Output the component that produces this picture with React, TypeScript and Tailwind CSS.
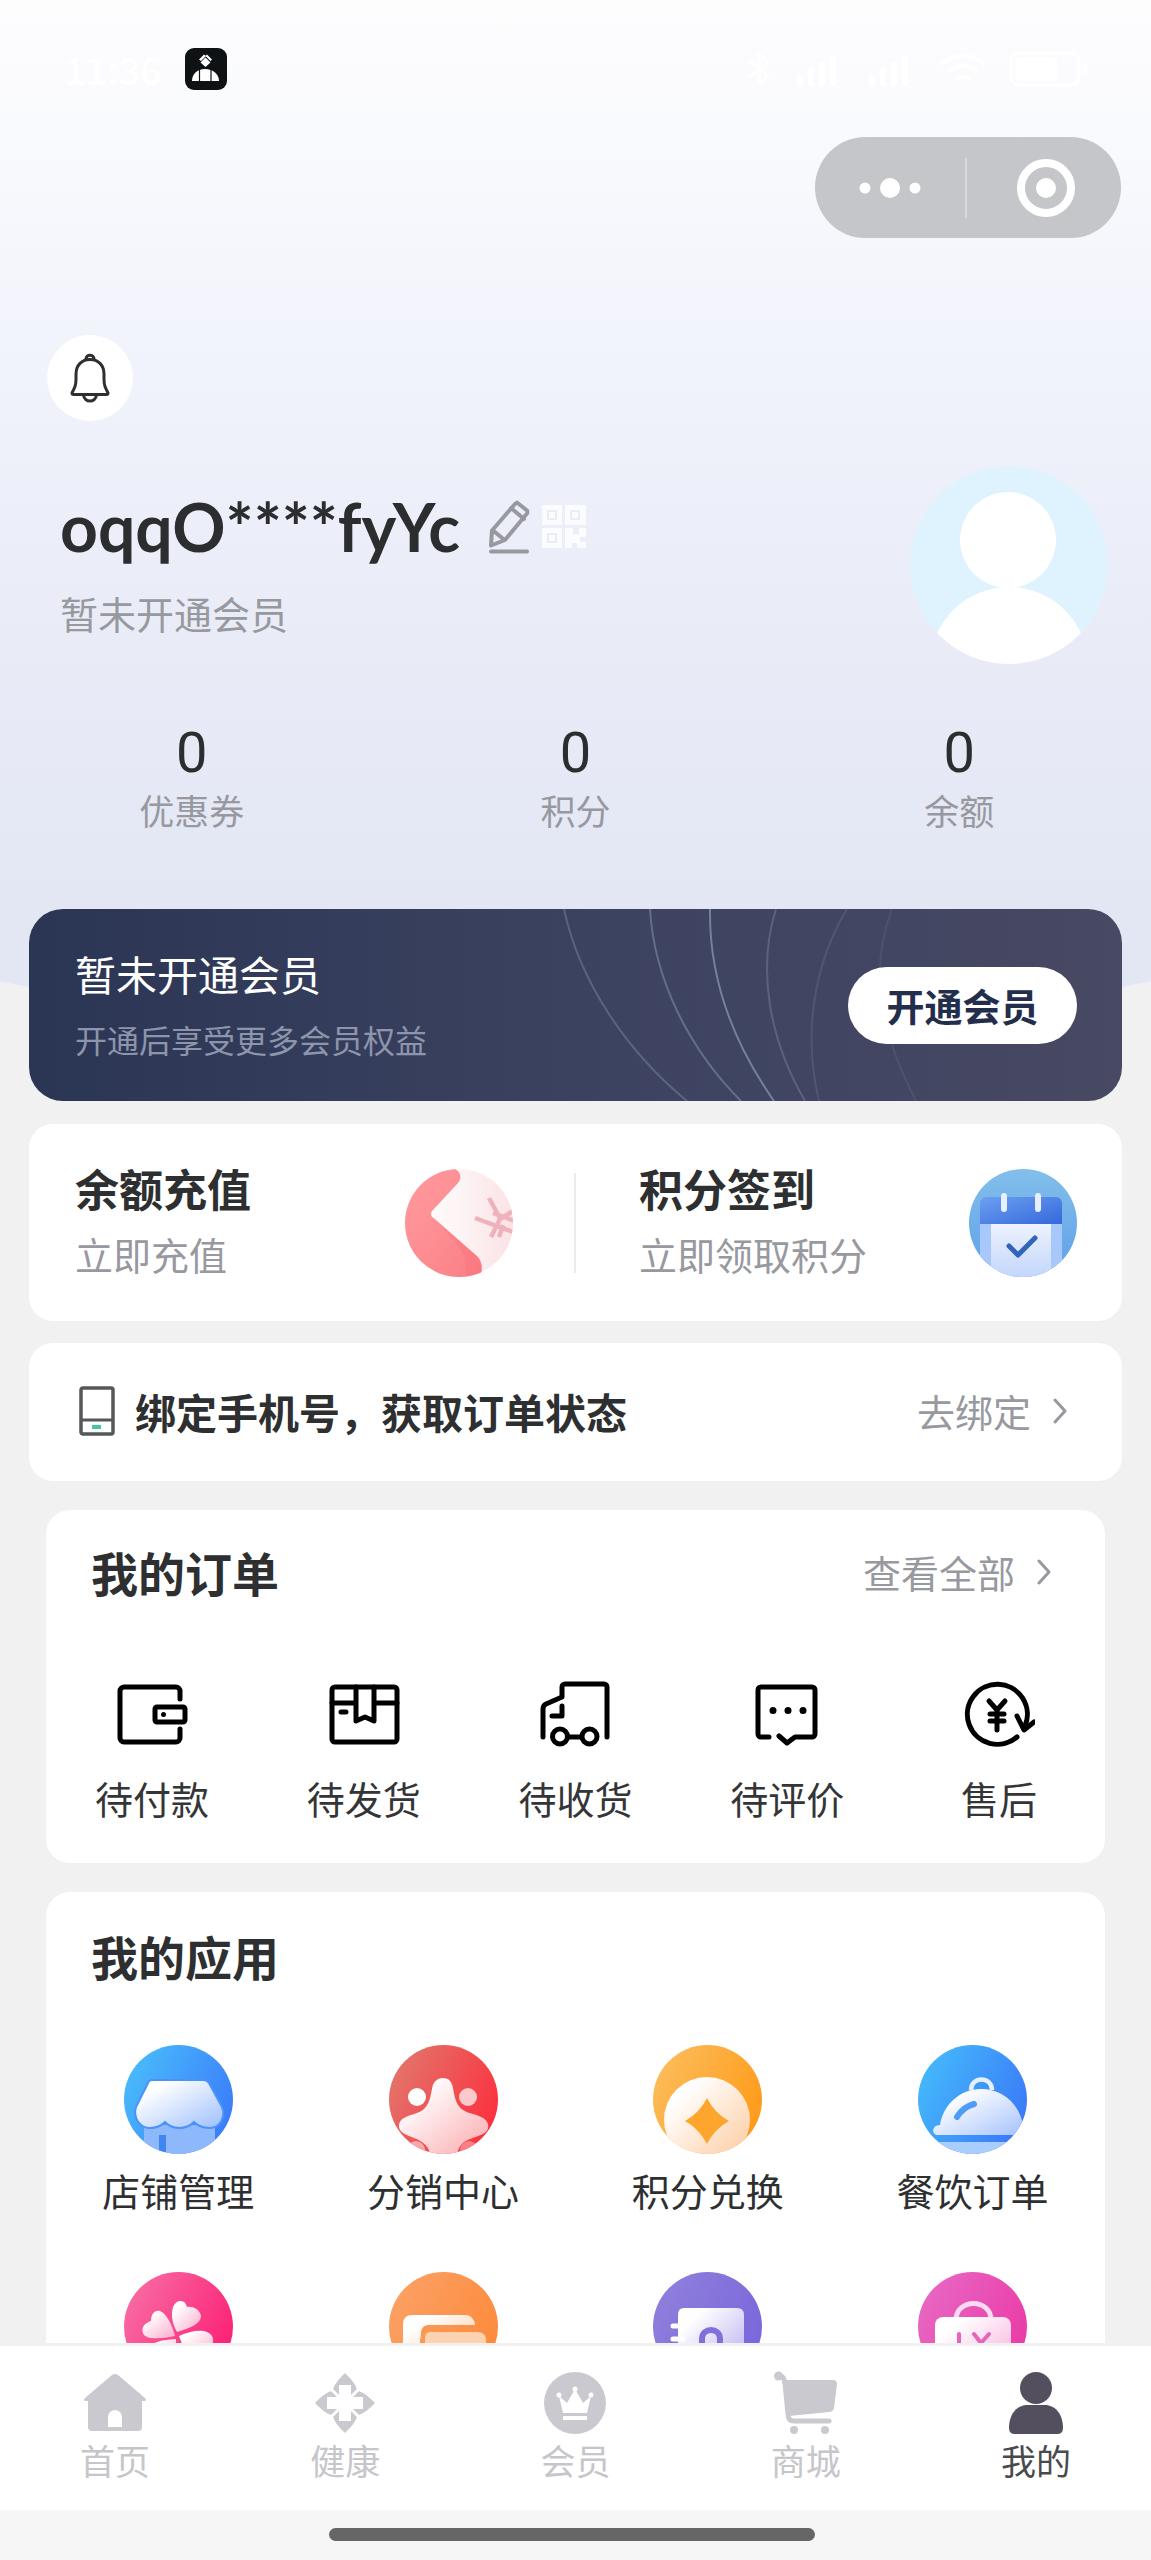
import type { ReactNode } from "react";

const line = {
  fill: "none",
  stroke: "currentColor",
  strokeWidth: 5,
  strokeLinecap: "round" as const,
  strokeLinejoin: "round" as const,
};

/* ---------- status bar ---------- */

function Signal() {
  return (
    <svg className="h-[34px] w-[50px]" viewBox="0 0 50 34" fill="#fff" aria-hidden="true">
      <rect x="2" y="22" width="6" height="12" rx="2" />
      <rect x="13" y="16" width="6" height="18" rx="2" />
      <rect x="24" y="10" width="6" height="24" rx="2" />
      <rect x="35" y="3" width="6" height="31" rx="2" />
    </svg>
  );
}

function StatusBar() {
  return (
    <div className="flex h-[137px] items-center justify-between pr-[62px] pl-[64px] text-white">
      <div className="flex items-center">
        <span className="w-[121px] text-[38px] leading-[48px] font-medium">11:36</span>
        <svg className="h-[42px] w-[42px]" viewBox="0 0 42 42" aria-hidden="true">
          <rect width="42" height="42" rx="9" fill="#0f1214" />
          <path d="M7 33c0-7 5-12 13-12s14 5 14 12z" fill="#fff" />
          <path d="M14.500 21v12M26 21v12" stroke="#0f1214" strokeWidth="1.200" />
          <path d="M20.500 9.500l5 5-5 4.500-5-4.500z" fill="#fff" />
          <path d="M14 11.500l5-5 2 1.500-5 5zM27 11.500l-5-5-1.500 1.500 5 5z" fill="#fff" />
        </svg>
      </div>
      <div className="flex items-center gap-[22px]">
        <svg className="h-[36px] w-[28px]" viewBox="0 0 28 36" {...line} strokeWidth={3} aria-hidden="true">
          <path d="M5 10l18 15-9 8V3l9 8L5 26" />
        </svg>
        <Signal />
        <Signal />
        <svg className="h-[36px] w-[48px]" viewBox="0 0 48 36" {...line} strokeWidth={4} aria-hidden="true">
          <path d="M4 12c12-10 28-10 40 0M11 20c8-7 18-7 26 0M18 28c4-3 8-3 12 0" />
        </svg>
        <svg className="h-[36px] w-[80px]" viewBox="0 0 80 36" aria-hidden="true">
          <rect x="2" y="2" width="68" height="32" rx="8" fill="none" stroke="#fff" strokeWidth="3" />
          <rect x="6" y="6" width="42" height="24" rx="5" fill="#fff" />
          <rect x="74" y="12" width="4" height="12" rx="2" fill="#fff" />
        </svg>
      </div>
    </div>
  );
}

function Capsule() {
  return (
    <div className="flex justify-end pr-[30px]">
      <div className="flex h-[101px] w-[306px] items-center rounded-full bg-[#c5c6ca]">
        <button className="flex h-full flex-1 items-center justify-center" aria-label="更多">
          <svg className="h-[24px] w-[64px]" viewBox="0 0 64 24" fill="#fff" aria-hidden="true">
            <circle cx="7" cy="12" r="5.500" />
            <circle cx="32" cy="12" r="10" />
            <circle cx="57" cy="12" r="5.500" />
          </svg>
        </button>
        <span className="h-[60px] w-[2px] bg-[#d9dadd]" />
        <button className="flex h-full flex-1 items-center justify-center pl-1" aria-label="关闭">
          <svg className="h-[58px] w-[58px]" viewBox="0 0 58 58" aria-hidden="true">
            <circle cx="29" cy="29" r="25" fill="none" stroke="#fff" strokeWidth="8" />
            <circle cx="29" cy="29" r="10" fill="#fff" />
          </svg>
        </button>
      </div>
    </div>
  );
}

/* ---------- profile ---------- */

function BellIcon() {
  return (
    <svg className="h-[50px] w-[42px] text-[#2e2f31]" viewBox="0 0 42 50" {...line} strokeWidth={3} aria-hidden="true">
      <path d="M3 40c3-6 4-8 4-14v-5C7 12 13 6.500 21 6.500S35 12 35 21v5c0 6 1 8 4 14 0 1-.500 1.500-1.500 1.500h-33C3.500 41.500 3 41 3 40z" />
      <path d="M17 6c0-5 8-5 8 0M14.500 42c1 8 12 8 13 0" />
    </svg>
  );
}

function PencilIcon() {
  return (
    <svg className="h-[54px] w-[42px]" viewBox="0 0 42 54" {...line} strokeWidth={4} aria-hidden="true">
      <path d="M27 4l2-1.500 10 8c.500 1 .500 2 0 3L17 40 3 45.500l1-15zM23 8l13 11M4.500 30l12 10" />
      <path d="M3 51.500h36" />
    </svg>
  );
}

function QrIcon() {
  return (
    <svg className="h-[44px] w-[44px]" viewBox="0 0 44 44" aria-hidden="true">
      <path d="M0 0h20v20H0zM23 0h21v20H23zM0 23h20v20H0zM23 23h8v6h6v-6h7v9h-6v5h6v6h-9v-5h-5v5h-7z" fill="#fff" fillOpacity="0.8" />
      <path d="M6 6h8v8H6zM29 6h8v8h-8zM6 29h8v8H6z" fill="none" stroke="#e9edf6" strokeWidth="2" />
    </svg>
  );
}

function Avatar() {
  return (
    <svg className="h-[200px] w-[200px]" viewBox="0 0 200 200" aria-hidden="true">
      <defs>
        <clipPath id="avatar">
          <circle cx="100" cy="100" r="99" />
        </clipPath>
      </defs>
      <circle cx="100" cy="100" r="99" fill="#dff3fe" />
      <g clipPath="url(#avatar)" fill="#fff">
        <circle cx="99" cy="75" r="48" />
        <circle cx="100" cy="201" r="79" />
      </g>
    </svg>
  );
}

const stats = ["优惠券", "积分", "余额"];

function Profile() {
  return (
    <header className="bg-[linear-gradient(180deg,#fdfdfe_0px,#f8f9fd_180px,#f4f5fc_290px,#f0f3fb_370px,#e9ecf7_640px,#e3e7f4_900px)] pb-[206px] [clip-path:ellipse(152%_100%_at_50%_0%)]">
      <StatusBar />
      <Capsule />
      <button className="mt-[97px] ml-[47px] flex h-[86px] w-[86px] items-center justify-center rounded-full bg-white" aria-label="消息">
        <BellIcon />
      </button>
      <div className="mt-11 flex items-center justify-between pr-[42px] pl-[60px]">
        <div className="pb-1">
          <div className="flex items-center">
            <h1 className="font-['Lato','Noto_Sans_CJK_SC',sans-serif] text-[66px] leading-[80px] font-bold text-[#2b2d2f]">
              oqqO****fyYc
            </h1>
            <button className="ml-7 text-[#97999f]" aria-label="编辑">
              <PencilIcon />
            </button>
            <button className="ml-3" aria-label="二维码">
              <QrIcon />
            </button>
          </div>
          <p className="mt-5 text-[38px] leading-[52px] text-[#97999f]">暂未开通会员</p>
        </div>
        <Avatar />
      </div>
      <dl className="mt-[54px] grid grid-cols-3 text-center">
        {stats.map((label) => (
          <div key={label} className="flex flex-col-reverse">
            <dt className="text-[35px] leading-[46px] text-[#97999f]">{label}</dt>
            <dd className="font-['Roboto',sans-serif] text-[56px] leading-[68px] text-[#2b2d2f]">0</dd>
          </div>
        ))}
      </dl>
    </header>
  );
}

/* ---------- cards ---------- */

function Membership() {
  return (
    <section className="relative flex h-[192px] items-center justify-between overflow-hidden rounded-[34px] bg-linear-to-r from-[#2b3654] via-[#3b4260] to-[#484963] pr-[45px] pl-[46px]">
      <svg className="absolute top-0 left-[520px] h-[192px] w-[400px]" viewBox="0 0 400 192" fill="none" stroke="#aebccb" strokeWidth="2" aria-hidden="true">
        <path d="M15 0C30 70 75 140 138 192" opacity=".28" />
        <path d="M101 0C105 70 140 140 192 192" opacity=".35" />
        <path d="M161 0C160 70 185 135 225 192" opacity=".5" />
        <path d="M227 0C208 60 220 130 256 192" opacity=".25" />
        <path d="M298 0C262 60 255 130 270 192" opacity=".14" />
        <path d="M343 0C320 60 330 120 367 192" opacity=".1" />
      </svg>
      <div className="relative pb-1">
        <h2 className="text-[41px] leading-[56px] text-white">暂未开通会员</h2>
        <p className="mt-4 text-[32px] leading-[44px] text-[#8d94ab]">开通后享受更多会员权益</p>
      </div>
      <button className="relative h-[77px] w-[229px] rounded-full bg-white text-[38px] leading-[52px] font-bold text-[#232d4c]">
        开通会员
      </button>
    </section>
  );
}

function RechargeIcon() {
  return (
    <svg className="h-[108px] w-[108px] shrink-0" viewBox="0 0 108 108" aria-hidden="true">
      <defs>
        <clipPath id="recharge">
          <circle cx="54" cy="54" r="54" />
        </clipPath>
        <linearGradient id="rechargeRed" x1="0" y1="0" x2="1" y2="1">
          <stop offset="0" stopColor="#ff9a9e" />
          <stop offset=".5" stopColor="#fd8e93" />
          <stop offset="1" stopColor="#fb7d84" />
        </linearGradient>
        <linearGradient id="rechargePaper" x1="0" y1="0" x2="1" y2="0">
          <stop offset="0" stopColor="#fff" />
          <stop offset=".5" stopColor="#fdf4f5" />
          <stop offset="1" stopColor="#fbe2e5" />
        </linearGradient>
      </defs>
      <g clipPath="url(#recharge)">
        <path d="M0 0h108v108H0z" fill="url(#rechargePaper)" />
        <path d="M0 0h50c6 3 7 9 3 14L27 42q-2 3 0 6l46 40c4 5 5 13 2 20H0z" fill="url(#rechargeRed)" />
        <path d="M26 46l47 42c4 5 5 13 2 20H60c6-22-8-32-34-62z" fill="#f96f78" opacity=".35" />
        <path d="M84 29l12 22M70 49l38 14M108 42L95 50 86 68M88 44l22 8M98 56l-4 12" fill="none" stroke="#efb1bb" strokeWidth="4.500" />
      </g>
    </svg>
  );
}

function CheckInIcon() {
  return (
    <svg className="h-[108px] w-[108px] shrink-0" viewBox="0 0 108 108" aria-hidden="true">
      <defs>
        <clipPath id="checkin">
          <circle cx="54" cy="54" r="54" />
        </clipPath>
        <linearGradient id="checkinBg" x1="0" y1="0" x2="0" y2="1">
          <stop offset="0" stopColor="#82bfeb" />
          <stop offset="1" stopColor="#5f9fe9" />
        </linearGradient>
        <linearGradient id="checkinTop" x1="0" y1="0" x2="1" y2="1">
          <stop offset="0" stopColor="#6da0f0" />
          <stop offset="1" stopColor="#3468dc" />
        </linearGradient>
        <linearGradient id="checkinPage" x1="0" y1="0" x2="0" y2="1">
          <stop offset="0" stopColor="#eef3fe" />
          <stop offset="1" stopColor="#c3d6fb" />
        </linearGradient>
      </defs>
      <g clipPath="url(#checkin)">
        <path d="M0 0h108v108H0z" fill="url(#checkinBg)" />
        <path d="M11 54h82v54H11z" fill="#a8c7fa" />
        <path d="M22 54h60v54H22z" fill="url(#checkinPage)" />
        <path d="M11 55V34a6 6 0 0 1 6-6h70a6 6 0 0 1 6 6v21z" fill="url(#checkinTop)" />
        <path d="M35 27v13M69 27v13" stroke="#e6f0fe" strokeWidth="6" strokeLinecap="round" />
        <path d="M40 77l9 9 17-17" fill="none" stroke="#3165b8" strokeWidth="5" strokeLinecap="round" strokeLinejoin="round" />
      </g>
    </svg>
  );
}

function QuickAction({ title, note, icon }: { title: string; note: string; icon: ReactNode }) {
  return (
    <a href="#" className="flex flex-1 items-center justify-between pr-[61px] pl-[46px] last:pr-[45px] last:pl-[63px]">
      <span className="flex flex-col gap-2 pb-1.5">
        <span className="text-[44px] leading-[60px] font-bold text-[#2e2f31]">{title}</span>
        <span className="text-[38px] leading-[56px] text-[#97999f]">{note}</span>
      </span>
      {icon}
    </a>
  );
}

function Chevron() {
  return (
    <svg className="h-[26px] w-[14px]" viewBox="0 0 14 26" {...line} strokeWidth={3} aria-hidden="true">
      <path d="M2 2l10 11L2 24" />
    </svg>
  );
}

function MoreLink({ children }: { children: string }) {
  return (
    <a href="#" className="flex items-center gap-[22px] text-[38px] leading-[52px] text-[#97999f]">
      {children}
      <Chevron />
    </a>
  );
}

function BindPhone() {
  return (
    <section className="flex h-[138px] items-center rounded-3xl bg-white pr-[55px] pb-0.5 pl-[50px]">
      <svg className="h-[50px] w-[36px]" viewBox="0 0 36 50" aria-hidden="true">
        <rect x="2" y="2" width="32" height="46" rx="2" fill="none" stroke="#55575a" strokeWidth="3.500" />
        <path d="M2 34h32" stroke="#55575a" strokeWidth="3" />
        <path d="M13 41h9" stroke="#43c79b" strokeWidth="4" />
      </svg>
      <h2 className="mr-auto ml-5 text-[41px] leading-[56px] font-bold text-[#2e2f31]">绑定手机号，获取订单状态</h2>
      <MoreLink>去绑定</MoreLink>
    </section>
  );
}

/* ---------- orders ---------- */

const orders: { label: string; icon: ReactNode }[] = [
  {
    label: "待付款",
    icon: (
      <>
        <path d="M64 21v-8a4 4 0 0 0-4-4H8a4 4 0 0 0-4 4v47a4 4 0 0 0 4 4h52a4 4 0 0 0 4-4v-9" />
        <rect x="39" y="29" width="30" height="15" rx="2" />
        <circle cx="47.500" cy="36.500" r="2.500" fill="currentColor" stroke="none" />
      </>
    ),
  },
  {
    label: "待发货",
    icon: (
      <>
        <rect x="4" y="9" width="65" height="55" rx="3" />
        <path d="M4 25h24M46 25h23M28 9v34l9-4 9 4V9M13 34h5" />
      </>
    ),
  },
  {
    label: "待收货",
    icon: (
      <>
        <path d="M4 59V31c0-3 1-4 3-5l16-7V9a3 3 0 0 1 3-3h39a3 3 0 0 1 3 3v50" />
        <path d="M23 28v10H13M29 59h13" />
        <circle cx="21" cy="58.500" r="7.500" />
        <circle cx="50.500" cy="58.500" r="7.500" />
      </>
    ),
  },
  {
    label: "待评价",
    icon: (
      <>
        <path d="M18 59h-8a3 3 0 0 1-3-3V12a3 3 0 0 1 3-3h51a3 3 0 0 1 3 3v44a3 3 0 0 1-3 3H44l-8 6-8-7" />
        <g fill="currentColor" stroke="none">
          <circle cx="22" cy="32.500" r="3.500" />
          <circle cx="37" cy="32.500" r="3.500" />
          <circle cx="52" cy="32.500" r="3.500" />
        </g>
      </>
    ),
  },
  {
    label: "售后",
    icon: (
      <>
        <path d="M54 59A30 30 0 1 1 62 48" />
        <path d="M54 38l7 14 10-8" />
        <path d="M26 23l8 9 8-9M34 32v20M27 36h14M27 43h14" />
      </>
    ),
  },
];

function Orders() {
  return (
    <section className="mt-[29px] rounded-3xl bg-white pb-[37px]">
      <div className="flex items-center justify-between pt-[30px] pr-[54px] pl-[45px]">
        <h2 className="text-[47px] leading-[64px] font-bold text-[#2e2f31]">我的订单</h2>
        <MoreLink>查看全部</MoreLink>
      </div>
      <ul className="mt-[74px] grid grid-cols-5">
        {orders.map((o) => (
          <li key={o.label}>
            <a href="#" className="flex flex-col items-center gap-5 text-black">
              <svg className="h-[72px] w-[72px]" viewBox="0 0 72 72" {...line} aria-hidden="true">
                {o.icon}
              </svg>
              <span className="text-[38px] leading-[56px] text-[#343537]">{o.label}</span>
            </a>
          </li>
        ))}
      </ul>
    </section>
  );
}

/* ---------- applications ---------- */

type AppItem = { id: string; label?: string; from: string; to: string; tint: string; art: (fill: string) => ReactNode };

const apps: AppItem[] = [
  {
    id: "store",
    label: "店铺管理",
    from: "#49bdfb",
    to: "#3b7bfa",
    tint: "#9dbffd",
    art: (f) => (
      <>
        <path d="M20 80h71v29H20z" fill="#8db9fc" />
        <path d="M35 90h7v19h-7z" fill="#3f86f3" />
        <path
          d="M28 35H80q3 0 5 3L98 62c4 10-2 21-12 21-7 0-12-2-16-6-4 4-9 6-15 6s-10-2-14-6c-4 4-9 6-15 6C15 83 9 72 12 62L24 38q1-3 4-3z"
          fill={f}
          stroke="#4b93f6"
          strokeWidth="2"
        />
      </>
    ),
  },
  {
    id: "partners",
    label: "分销中心",
    from: "#e2776d",
    to: "#fc2f3d",
    tint: "#fba9ad",
    art: (f) => (
      <>
        <circle cx="28" cy="52" r="9" fill="#fff" />
        <circle cx="79" cy="52" r="9" fill="#fcc9ca" />
        <circle cx="27" cy="105" r="9" fill="#f8a8a8" />
        <circle cx="80" cy="105" r="9" fill="#fb7f86" />
        <path
          d="M54 33c6 0 9 4 10 10 2 12 4 18 10 22 6 4 14 4 20 8 7 4 7 13 0 16-8 4-17 5-21 10-3 3-4 6-5 10H41c-1-6-4-9-8-12-5-4-13-5-19-9-6-4-5-12 1-15 7-4 14-4 20-9 5-5 6-10 8-20 1-7 5-11 11-11z"
          fill={f}
        />
      </>
    ),
  },
  {
    id: "points",
    label: "积分兑换",
    from: "#fcbd5c",
    to: "#fe9a18",
    tint: "#fdc89a",
    art: (f) => (
      <>
        <circle cx="54" cy="75" r="43" fill={f} />
        <path d="M54 53c6 11 12 17 22 23-10 6-16 12-22 23-6-11-12-17-22-23 10-6 16-12 22-23z" fill="#fda52c" />
      </>
    ),
  },
  {
    id: "dining",
    label: "餐饮订单",
    from: "#45bbfb",
    to: "#3a78f8",
    tint: "#a5c2fc",
    art: (f) => (
      <>
        <path d="M53 45c0-14 21-14 21 0" fill="none" stroke="#e5effe" strokeWidth="4.500" />
        <path d="M22 80c3-20 20-36 41-36s38 14 42 36v10H19c-6-1-5-10 3-10z" fill={f} />
        <path d="M39 72c4-7 10-11 17-13" fill="none" stroke="#4d9cf7" strokeWidth="6" strokeLinecap="round" />
        <path d="M10 97h90v12H10z" fill="#a9cdfd" />
      </>
    ),
  },
  {
    id: "clover",
    from: "#f76da4",
    to: "#fd1f74",
    tint: "#fbabcb",
    art: (f) => (
      <g fill={f}>
        <path d="M53 60C45 46 47 30 56 29c5 0 6 3 7 6 5-1 13 2 14 9 0 8-11 12-24 16z" />
        <path d="M51 64c-3-12-9-23-15-25-6-1-9 4-9 10-6 2-10 6-8 12 2 7 17 6 32 3z" />
        <path d="M55 64c13-6 28-8 33 0 4 8-3 11-6 12 0 8-5 12-11 11-7-2-12-12-16-23z" />
        <path d="M52 67c0 14-4 26-12 28-6 1-9-3-9-8-6-1-9-5-7-10 3-7 14-9 28-10z" />
      </g>
    ),
  },
  {
    id: "cards",
    from: "#fba166",
    to: "#fd8a3a",
    tint: "#fcc196",
    art: (f) => (
      <>
        <path d="M14 92V53c0-7 3-10 10-10h52c6 0 10 5 10 10H40c-6 0-8 4-8 9l-4 30z" fill={f} />
        <path d="M36 90V66c0-4 2-6 6-6h46c6 0 9 3 9 8v22z" fill="#fdd2b0" />
      </>
    ),
  },
  {
    id: "ledger",
    from: "#9080dc",
    to: "#7a66db",
    tint: "#b4a9ef",
    art: (f) => (
      <>
        <path d="M31 36h53q7 0 7 7v56H25V43q0-7 6-7z" fill={f} />
        <path d="M20 54h10M20 67h10" stroke="#fff" strokeWidth="5" strokeLinecap="round" />
        <path d="M49 72v-5c0-12 18-12 18 0v5" fill="none" stroke="#8170dc" strokeWidth="6" />
      </>
    ),
  },
  {
    id: "bag",
    from: "#e868c4",
    to: "#ea3aa6",
    tint: "#f7a6d6",
    art: (f) => (
      <>
        <path d="M38 48c0-22 35-22 35 0" fill="none" stroke="#fbd9ee" strokeWidth="5" />
        <rect x="17" y="45" width="76" height="60" rx="8" fill={f} />
        <path d="M41 62v16M56 62l7 9 8-9" fill="none" stroke="#e565bd" strokeWidth="4" strokeLinecap="round" />
      </>
    ),
  },
];

function AppIcon({ item }: { item: AppItem }) {
  return (
    <svg className="h-[109px] w-[109px]" viewBox="0 0 109 109" aria-hidden="true">
      <defs>
        <clipPath id={item.id + "Clip"}>
          <circle cx="54.500" cy="54.500" r="54.500" />
        </clipPath>
        <linearGradient id={item.id + "Bg"} x1="0" y1="0.200" x2="1" y2="0.700">
          <stop offset="0" stopColor={item.from} />
          <stop offset="1" stopColor={item.to} />
        </linearGradient>
        <linearGradient id={item.id + "Art"} x1="0.200" y1="0.200" x2="1" y2="1">
          <stop offset="0" stopColor="#fff" />
          <stop offset="1" stopColor={item.tint} />
        </linearGradient>
      </defs>
      <g clipPath={"url(#" + item.id + "Clip)"}>
        <path d="M0 0h109v109H0z" fill={"url(#" + item.id + "Bg)"} />
        {item.art("url(#" + item.id + "Art)")}
      </g>
    </svg>
  );
}

function Apps() {
  return (
    <section className="mt-[29px] rounded-3xl bg-white pb-8">
      <h2 className="pt-[32px] pl-[45px] text-[47px] leading-[64px] font-bold text-[#2e2f31]">我的应用</h2>
      <ul className="mt-[57px] grid grid-cols-4 gap-y-[54px]">
        {apps.map((a) => (
          <li key={a.id}>
            <a href="#" className="flex flex-col items-center gap-2">
              <AppIcon item={a} />
              {a.label && <span className="text-[38px] leading-[56px] text-[#2e2f31]">{a.label}</span>}
            </a>
          </li>
        ))}
      </ul>
    </section>
  );
}

/* ---------- tab bar ---------- */

const petal = "M32 2C37 7 44 14 44 20c0 4-5 7-7 12H27c-2-5-7-8-7-12 0-6 7-13 12-18z";

const tabs: { label: string; icon: ReactNode }[] = [
  {
    label: "首页",
    icon: <path fillRule="evenodd" d="M29 4q3-2 6 0l27 23q2 2 0 3h-3v26q0 4-4 4H9q-4 0-4-4V30H2q-2-1 0-3zM25 56h14V46a7 7 0 0 0-14 0z" />,
  },
  {
    label: "健康",
    icon: (
      <>
        <path d={petal} />
        <path d={petal} transform="rotate(90 32 32)" />
        <path d={petal} transform="rotate(180 32 32)" />
        <path d={petal} transform="rotate(270 32 32)" />
        <path d="M17 17l30 30M47 17L17 47" stroke="#fff" strokeWidth="3" />
        <path d="M26 14h12v12h12v12H38v12H26V38H14V26h12z" fill="#fff" />
      </>
    ),
  },
  {
    label: "会员",
    icon: (
      <>
        <circle cx="32" cy="32" r="31" />
        <g fill="#fff">
          <path d="M20 42l-4-17 8 7 8-14 8 14 8-7-4 17z" />
          <path d="M20 45h24v4H20z" />
          <circle cx="16" cy="24" r="2.500" />
          <circle cx="32" cy="18" r="2.500" />
          <circle cx="48" cy="24" r="2.500" />
        </g>
      </>
    ),
  },
  {
    label: "商城",
    icon: (
      <>
        <path d="M4 5c5-1 6 2 7 8l3 30c0 5 2 7 6 7h35" fill="none" stroke="currentColor" strokeWidth="5" strokeLinecap="round" />
        <circle cx="4.500" cy="5" r="4.500" />
        <path d="M10 9h49q4 0 4 4l-3 24q-1 4-5 4l-40 4z" />
        <circle cx="20" cy="59" r="4" />
        <circle cx="51" cy="59" r="4" />
      </>
    ),
  },
  {
    label: "我的",
    icon: (
      <>
        <circle cx="32" cy="17" r="16" />
        <path d="M5 57c0-14 8-23 18-23h18c10 0 18 9 18 23q0 6-6 6H11q-6 0-6-6z" />
      </>
    ),
  },
];

function TabBar() {
  return (
    <nav className="shrink-0 border-t-3 border-[#f1f1f1] bg-white">
      <ul className="grid h-[164px] grid-cols-5 pt-[25px]">
        {tabs.map((t, i) => {
          const active = i === tabs.length - 1;
          return (
            <li key={t.label}>
              <a href="#" aria-current={active ? "page" : undefined} className={"flex flex-col items-center gap-0.5 " + (active ? "text-[#534f5e]" : "text-[#cac9cf]")}>
                <svg className="h-[64px] w-[64px]" viewBox="0 0 64 64" fill="currentColor" aria-hidden="true">
                  {t.icon}
                </svg>
                <span className={"text-[35px] leading-[46px] " + (active ? "text-[#4a4a4e]" : "text-[#c6c6ca]")}>{t.label}</span>
              </a>
            </li>
          );
        })}
      </ul>
      <div className="flex h-[50px] justify-center bg-[#f6f6f6] pt-[18px] pr-2">
        <span className="h-[13px] w-[486px] rounded-full bg-[#666]" />
      </div>
    </nav>
  );
}

export default function App() {
  return (
    <div className="flex h-screen flex-col bg-[#f1f1f1] font-['Noto_Sans_CJK_SC',sans-serif]">
      <main className="min-h-0 flex-1 overflow-y-auto [scrollbar-width:none]">
        <Profile />
        <div className="relative -mt-[130px] px-[29px]">
          <Membership />
          <section className="mt-[23px] flex h-[197px] items-center rounded-3xl bg-white">
            <QuickAction title="余额充值" note="立即充值" icon={<RechargeIcon />} />
            <span className="h-[100px] w-[2px] bg-[#ececee]" />
            <QuickAction title="积分签到" note="立即领取积分" icon={<CheckInIcon />} />
          </section>
          <div className="mt-[22px]">
            <BindPhone />
          </div>
          <div className="px-[17px]">
            <Orders />
            <Apps />
          </div>
        </div>
      </main>
      <TabBar />
    </div>
  );
}
